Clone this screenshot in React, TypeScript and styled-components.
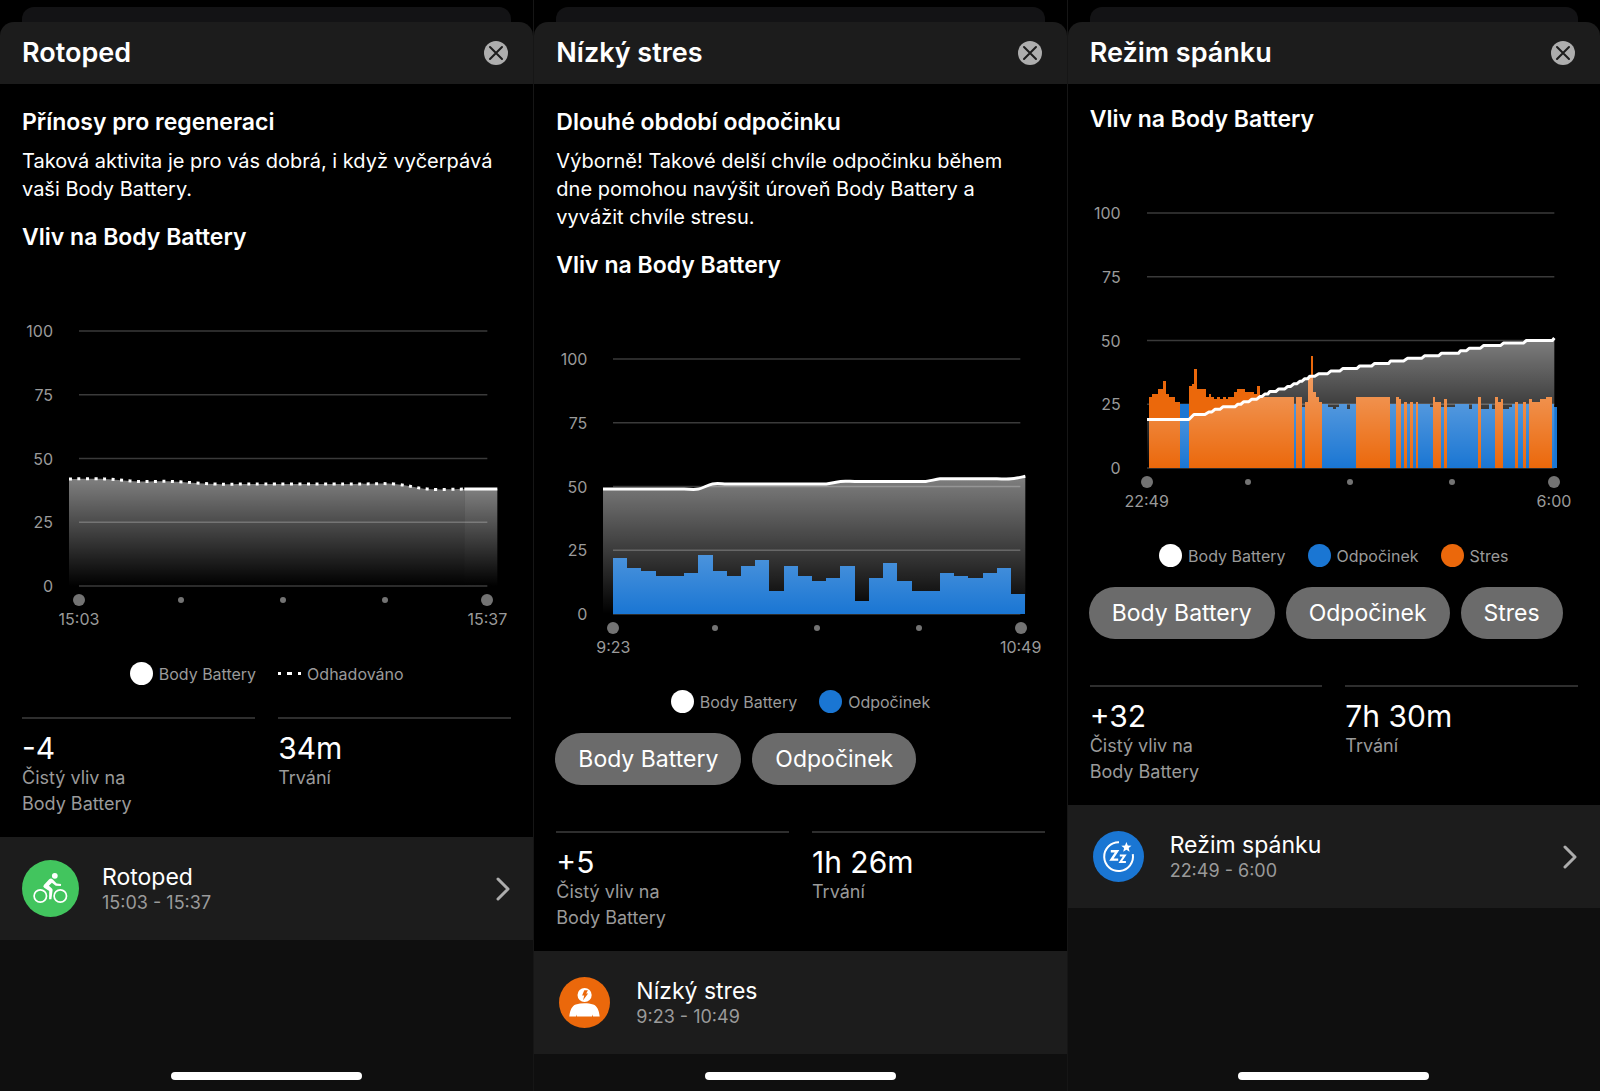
import React from "react";
import styled, { createGlobalStyle } from "styled-components";

/* ---------- theme values ---------- */

const color = {
  sheet: "#1c1c1c",
  backSheet: "#131315",
  below: "#0f0f0f",
  text: "#ffffff",
  muted: "#9a9a9a",
  grid: "#3a3a3a",
  dot: "#737373",
  chip: "#6b6b6b",
  blue: "#1a76d3",
  orange: "#eb680b",
  green: "#42c55e",
};

const GlobalStyle = createGlobalStyle`
  *, *::before, *::after { box-sizing: border-box; }
  body {
    margin: 0;
    background: #000;
    color: ${color.text};
    font-family: Inter, "Noto Sans", sans-serif;
  }
  h1, h2, p, dl, dd, dt { margin: 0; }
`;

/* ---------- layout ---------- */

const Screens = styled.div`
  display: grid;
  grid-template-columns: repeat(3, minmax(0, 1fr));
  min-height: 100vh;
`;

const Screen = styled.section`
  display: flex;
  flex-direction: column;
  background: ${color.below};

  & + & {
    border-left: 1px solid #161616;
  }
`;

const StackedSheets = styled.div`
  padding: 7px 22px 0;
  background: #000;
`;

const BackSheet = styled.div`
  height: 15px;
  border-radius: 12px 12px 0 0;
  background: ${color.backSheet};
`;

const HeaderWrap = styled.div`
  background: #000;
`;

const Header = styled.header`
  display: flex;
  align-items: center;
  justify-content: space-between;
  height: 62px;
  padding: 0 25px 0 22px;
  border-radius: 14px 14px 0 0;
  background: ${color.sheet};
`;

const Title = styled.h1`
  font-size: 27px;
  line-height: 32px;
  font-weight: 600;
`;

const CloseButton = styled.button`
  display: block;
  width: 24px;
  height: 24px;
  padding: 0;
  border: 0;
  border-radius: 50%;
  background: #adadad;
  cursor: pointer;

  svg {
    display: block;
  }
`;

const Content = styled.div<{ $compact?: boolean }>`
  padding: ${(p) => (p.$compact ? 21 : 24)}px 22px 20px;
  background: #000;
`;

const Heading = styled.h2`
  font-size: 23px;
  line-height: 28px;
  font-weight: 600;
`;

const Intro = styled.p`
  margin: 11px 0 20px;
  padding-right: 10px;
  font-size: 20px;
  line-height: 28px;
`;

/* ---------- chart ---------- */

const ChartArea = styled.figure`
  display: grid;
  grid-template-columns: 31px minmax(0, 1fr);
  column-gap: 26px;
  margin: 80px 24px 0 0;
`;

const YAxis = styled.div`
  display: flex;
  flex-direction: column;
  justify-content: space-between;
  height: 273px;
  margin-top: -9px;
  text-align: right;
  font-size: 16px;
  line-height: 18px;
  color: ${color.muted};
`;

const Plot = styled.svg`
  display: block;
  width: 100%;
  height: 255px;
  overflow: visible;
`;

const XAxis = styled.div`
  grid-column: 2;
  display: flex;
  justify-content: space-between;
  margin: -1px -30px 0;
`;

const Tick = styled.div`
  display: flex;
  flex-direction: column;
  align-items: center;
  gap: 4px;
  width: 60px;
  font-size: 16px;
  line-height: 18px;
  color: ${color.muted};
`;

const TickDot = styled.span<{ $small?: boolean }>`
  width: ${(p) => (p.$small ? 6 : 12)}px;
  height: ${(p) => (p.$small ? 6 : 12)}px;
  margin: ${(p) => (p.$small ? 3 : 0)}px 0;
  border-radius: 50%;
  background: ${color.dot};
`;

const Legend = styled.div`
  display: flex;
  justify-content: center;
  gap: 22px;
  margin-top: 34px;
`;

const LegendItem = styled.span`
  display: flex;
  align-items: center;
  gap: 6px;
  height: 23px;
  font-size: 16px;
  line-height: 18px;
  color: ${color.muted};
`;

const Swatch = styled.span<{ $color: string }>`
  width: 23px;
  height: 23px;
  border-radius: 50%;
  background: ${(p) => p.$color};
`;

const Chips = styled.div`
  display: flex;
  gap: 11px;
  margin: 20px -22px 0 -1px;
`;

const Chip = styled.button`
  height: 52px;
  padding: 0 23px;
  border: 0;
  border-radius: 26px;
  background: ${color.chip};
  color: ${color.text};
  font: inherit;
  font-size: 23px;
  white-space: nowrap;
  cursor: pointer;
`;

/* ---------- statistics ---------- */

const Stats = styled.dl<{ $spaced?: boolean }>`
  display: grid;
  grid-template-columns: repeat(2, minmax(0, 1fr));
  column-gap: 23px;
  margin-top: ${(p) => (p.$spaced ? 46 : 32)}px;
`;

const Stat = styled.div`
  display: flex;
  flex-direction: column-reverse;
  justify-content: flex-end;
  padding-top: 12px;
  border-top: 2px solid #2e2e2e;
`;

const StatValue = styled.dd`
  font-size: 30px;
  line-height: 34px;
`;

const StatLabel = styled.dt`
  max-width: 130px;
  font-size: 18px;
  line-height: 26px;
  color: ${color.muted};
`;

/* ---------- activity row ---------- */

const ActivityRow = styled.a`
  display: flex;
  align-items: center;
  height: 103px;
  padding: 0 23px 0 22px;
  background: ${color.sheet};
  color: inherit;
  text-decoration: none;
`;

const IconSlot = styled.span`
  display: flex;
  justify-content: center;
  width: 57px;
  margin-right: 23px;
`;

const ActivityText = styled.span`
  display: flex;
  flex: 1;
  flex-direction: column;
`;

const ActivityName = styled.span`
  font-size: 23px;
  line-height: 28px;
`;

const ActivityTime = styled.span`
  font-size: 18px;
  line-height: 24px;
  color: ${color.muted};
`;

const Footer = styled.footer`
  display: flex;
  justify-content: center;
  margin-top: auto;
  padding: 11px 0;
`;

const HomeIndicator = styled.div`
  width: 191px;
  height: 8px;
  border-radius: 4px;
  background: #fff;
`;

/* ---------- icons ---------- */

const CloseIcon = () => (
  <svg width="24" height="24" viewBox="0 0 24 24" aria-hidden="true">
    <path d="M6 6l12 12M18 6L6 18" stroke="#1c1c1c" strokeWidth="2" strokeLinecap="round" />
  </svg>
);

const ChevronIcon = () => (
  <svg width="14" height="24" viewBox="0 0 14 24" fill="none" aria-hidden="true">
    <path d="M2 2l10 10L2 22" stroke="#adadad" strokeWidth="3" strokeLinecap="round" strokeLinejoin="round" />
  </svg>
);

const BikeIcon = () => (
  <svg width="57" height="57" viewBox="0 0 57 57" aria-hidden="true">
    <circle cx="28.5" cy="28.5" r="28.5" fill={color.green} />
    <g fill="none" stroke="#fff" strokeWidth="1.7">
      <circle cx="18.3" cy="36" r="6.2" />
      <circle cx="38.3" cy="36" r="6.2" />
    </g>
    <circle cx="32.8" cy="15.8" r="2.9" fill="#fff" />
    <path
      d="M27.2 19.2q1.8-1.4 3.6.2l3.9 4 4.4.6-.2 1.9-5.2-.2-3.8-3-3 3.1 3 2.6q.8.8.7 1.8l-1.2 9h-2.3l.1-8.2-5-3.2q-1.7-1.3-.3-2.9z"
      fill="#fff"
    />
  </svg>
);

const StressIcon = () => (
  <svg width="51" height="51" viewBox="0 0 51 51" aria-hidden="true">
    <circle cx="25.5" cy="25.5" r="25.5" fill={color.orange} />
    <circle cx="25.6" cy="18" r="7.1" fill="#fff" />
    <path d="M25.3 13.2h3.6l-1.7 3.4h1.9l-5 6.6 1.1-4.8h-2.1z" fill={color.orange} />
    <path
      d="M10.3 39.4c.7-6.5 2.7-10.7 6.5-12 5.4-1.6 12.2-1.6 17.4 0 3.8 1.3 5.8 5.5 6.5 12h-6.700l-.3-1.8-.7 1.8H18l-.4-1.8-.5 1.8z"
      fill="#fff"
    />
  </svg>
);

const SleepIcon = () => (
  <svg width="51" height="51" viewBox="0 0 51 51" aria-hidden="true">
    <circle cx="25.5" cy="25.5" r="25.5" fill={color.blue} />
    <path d="M26 11.2A14.4 14.4 0 1 0 39.8 23.2" fill="none" stroke="#fff" strokeWidth="2" />
    <path
      d="M33.4 11l1.4 3.4 3.7.3-2.8 2.4.9 3.6-3.2-2-3.2 2 .9-3.6-2.8-2.4 3.7-.3z"
      fill="#fff"
    />
    <g fill="none" stroke="#fff">
      <path d="M17.8 20.2h6.3l-5.6 8.4h6.7" strokeWidth="2.4" />
      <path d="M26.8 24.4h5l-4.4 6.5h5.5" strokeWidth="2" />
    </g>
  </svg>
);

const DashSwatch = () => (
  <svg width="23" height="3" viewBox="0 0 23 3" fill="#fff" aria-hidden="true">
    <rect width="3" height="3" />
    <rect x="9" width="5" height="3" />
    <rect x="20" width="3" height="3" />
  </svg>
);

/* ---------- chart data ---------- */

type Point = [number, number];
type Bar = { kind: "rest" | "stress"; value: number };
type BarSet = { start: number; end: number; bars: Bar[] };

const PLOT_W = 408;
const PLOT_H = 255;
const levelY = (v: number) => PLOT_H - (v * PLOT_H) / 100;

const bikeEstimated: Point[] = [
  [-10, 42], [25, 42], [59, 41], [93, 41], [135, 40], [175, 40],
  [275, 40], [315, 40], [349, 38], [385, 38],
];
const bikeMeasured: Point[] = [[385, 38], [418, 38]];

const restLevels = [
  22, 18, 17, 15, 15, 16, 23, 17, 15, 19, 21, 9, 19, 15, 13,
  14, 19, 5, 14, 20, 13, 9, 9, 16, 15, 14, 16, 18, 8,
];
const restStep = 413 / restLevels.length;
const restBattery: Point[] = [
  [-10, 49],
  ...restLevels.map((_, i): Point => {
    const at = i + 1;
    return [at * restStep, at < 7 ? 49 : at < 16 ? 51 : at < 23 ? 52 : at < 29 ? 53 : 54];
  }),
];

/* Sleep levels, run-length encoded: s = stress, r = rest, "<level>x<count>". */
const sleepRuns =
  "s28x1 s29x2 s31x2 s34x1 s29x1 s28x2 s26x2 r25x3 s32x1 s33x1 s39x1 s31x3 s28x1 s29x1 s28x1 " +
  "s27x1 s28x1 s27x1 s28x1 s27x1 s28x2 s30x1 s31x3 s30x3 s29x1 s32x1 s28x12 r25x1 s28x2 r24x1 " +
  "s26x1 s36x1 s44x1 s30x1 s28x1 s26x1 r25x2 r24x2 r23x1 r24x1 r25x3 r23x1 r25x2 s28x12 r25x2 " +
  "s28x1 s27x1 r25x1 s26x1 r25x1 s26x1 r25x1 s26x1 r25x4 r24x1 s28x1 s26x2 r24x1 s27x1 r24x3 " +
  "r25x5 r23x1 r25x2 s28x1 r23x3 r25x1 r23x1 s28x1 s26x1 s27x1 r23x2 r24x1 r25x1 s26x1 r25x2 " +
  "s26x1 r25x1 s27x1 s26x3 s27x2 s28x2 r25x1 r24x1";

const sleepBars: Bar[] = sleepRuns.split(" ").flatMap((run) => {
  const [value, count] = run.slice(1).split("x").map(Number);
  return Array.from({ length: count }, (): Bar => ({ kind: run[0] === "s" ? "stress" : "rest", value }));
});

/* Plateaus of the battery level over the night: [level, from, to]. */
const sleepBattery: Point[] = (
  [
    [19, 0, 42], [21, 47, 58], [22, 62, 65], [23, 68, 73], [24, 76, 88], [25, 91, 94],
    [26, 97, 102], [27, 105, 110], [28, 113, 115], [29, 118, 121], [30, 123, 129],
    [31, 132, 138], [32, 141, 144], [33, 147, 150], [34, 153, 155], [35, 158, 161],
    [36, 163, 168], [37, 172, 181], [38, 184, 193], [39, 196, 210], [40, 213, 225],
    [41, 228, 242], [42, 244, 257], [43, 261, 275], [44, 278, 292], [45, 295, 312],
    [46, 314, 320], [47, 323, 334], [48, 337, 354], [49, 357, 377], [50, 380, 406],
    [51, 408, 408],
  ] as [number, number, number][]
).flatMap(([v, a, b]): Point[] => [[a, v], [b, v]]);

/* ---------- chart drawing ---------- */

const straightPath = (pts: Point[]) =>
  pts.map(([x, v], i) => `${i ? "L" : "M"}${x} ${levelY(v)}`).join("");

const smoothPath = (pts: Point[]) =>
  pts
    .map(([x, v], i) => {
      if (!i) return `M${x} ${levelY(v)}`;
      const p0 = pts[Math.max(i - 2, 0)];
      const p1 = pts[i - 1];
      const p3 = pts[Math.min(i + 1, pts.length - 1)];
      return (
        `C${p1[0] + (x - p0[0]) / 6} ${levelY(p1[1] + (v - p0[1]) / 6)} ` +
        `${x - (p3[0] - p1[0]) / 6} ${levelY(v - (p3[1] - p1[1]) / 6)} ${x} ${levelY(v)}`
      );
    })
    .join("");

type Series = { points: Point[]; dotted?: boolean; smooth?: boolean };

type ChartProps = {
  id: string;
  label: string;
  from: string;
  to: string;
  series: Series[];
  barSet?: BarSet;
};

function Chart({ id, label, from, to, series, barSet }: ChartProps) {
  const step = barSet ? (barSet.end - barSet.start) / barSet.bars.length : 0;
  return (
    <ChartArea aria-label={label}>
      <YAxis>
        {[100, 75, 50, 25, 0].map((v) => (
          <span key={v}>{v}</span>
        ))}
      </YAxis>
      <Plot viewBox={`0 0 ${PLOT_W} ${PLOT_H}`} preserveAspectRatio="none" aria-hidden="true">
        <defs>
          <linearGradient id={`${id}-fade`} x1="0" y1="0" x2="0" y2="1">
            <stop offset="0" stopColor="#fff" stopOpacity="0.5" />
            <stop offset="1" stopColor="#fff" stopOpacity="0" />
          </linearGradient>
        </defs>
        {[100, 75, 50, 25, 0].map((v) => (
          <line key={v} x1="0" x2={PLOT_W} y1={levelY(v)} y2={levelY(v)} stroke={color.grid} strokeWidth="1.5" />
        ))}
        {barSet && (
          <g shapeRendering="crispEdges">
            {barSet.bars.map((b, i) => (
              <rect
                key={i}
                x={barSet.start + i * step}
                y={levelY(b.value)}
                width={step}
                height={PLOT_H - levelY(b.value)}
                fill={b.kind === "rest" ? color.blue : color.orange}
              />
            ))}
          </g>
        )}
        {series.map(({ points, dotted, smooth }, i) => {
          const line = smooth ? smoothPath(points) : straightPath(points);
          return (
            <g key={i}>
              <path
                d={`${line}L${points[points.length - 1][0]} ${PLOT_H}L${points[0][0]} ${PLOT_H}Z`}
                fill={`url(#${id}-fade)`}
              />
              <path
                d={line}
                fill="none"
                stroke="#fff"
                strokeWidth="3"
                strokeLinejoin="round"
                strokeDasharray={dotted ? "3 5.5" : undefined}
              />
            </g>
          );
        })}
      </Plot>
      <XAxis>
        <Tick><TickDot />{from}</Tick>
        <Tick><TickDot $small /></Tick>
        <Tick><TickDot $small /></Tick>
        <Tick><TickDot $small /></Tick>
        <Tick><TickDot />{to}</Tick>
      </XAxis>
    </ChartArea>
  );
}

/* ---------- screen ---------- */

type LegendEntry = { label: string; color?: string };

type DetailProps = {
  title: string;
  heading?: string;
  intro?: string;
  chart: ChartProps;
  legend: LegendEntry[];
  filters?: string[];
  impact: string;
  duration: string;
  icon: React.ReactNode;
  linked?: boolean;
};

function DetailScreen(p: DetailProps) {
  return (
    <Screen>
      <StackedSheets>
        <BackSheet />
      </StackedSheets>
      <HeaderWrap>
        <Header>
          <Title>{p.title}</Title>
          <CloseButton type="button" aria-label="Zavřít">
            <CloseIcon />
          </CloseButton>
        </Header>
      </HeaderWrap>
      <Content $compact={!p.heading}>
        {p.heading && (
          <>
            <Heading>{p.heading}</Heading>
            <Intro>{p.intro}</Intro>
          </>
        )}
        <Heading>Vliv na Body Battery</Heading>
        <Chart {...p.chart} />
        <Legend>
          {p.legend.map((l) => (
            <LegendItem key={l.label}>
              {l.color ? <Swatch $color={l.color} /> : <DashSwatch />}
              {l.label}
            </LegendItem>
          ))}
        </Legend>
        {p.filters && (
          <Chips>
            {p.filters.map((f) => (
              <Chip key={f} type="button" aria-pressed="true">
                {f}
              </Chip>
            ))}
          </Chips>
        )}
        <Stats $spaced={!!p.filters}>
          <Stat>
            <StatLabel>Čistý vliv na Body Battery</StatLabel>
            <StatValue>{p.impact}</StatValue>
          </Stat>
          <Stat>
            <StatLabel>Trvání</StatLabel>
            <StatValue>{p.duration}</StatValue>
          </Stat>
        </Stats>
      </Content>
      <ActivityRow as={p.linked ? "a" : "div"} href={p.linked ? "#" : undefined}>
        <IconSlot>{p.icon}</IconSlot>
        <ActivityText>
          <ActivityName>{p.title}</ActivityName>
          <ActivityTime>
            {p.chart.from} - {p.chart.to}
          </ActivityTime>
        </ActivityText>
        {p.linked && <ChevronIcon />}
      </ActivityRow>
      <Footer>
        <HomeIndicator />
      </Footer>
    </Screen>
  );
}

const battery: LegendEntry = { label: "Body Battery", color: "#ffffff" };
const rest: LegendEntry = { label: "Odpočinek", color: color.blue };
const stress: LegendEntry = { label: "Stres", color: color.orange };

export default function App() {
  return (
    <>
      <GlobalStyle />
      <Screens>
        <DetailScreen
          title="Rotoped"
          heading="Přínosy pro regeneraci"
          intro="Taková aktivita je pro vás dobrá, i když vyčerpává vaši Body Battery."
          chart={{
            id: "bike",
            label: "Body Battery, 15:03 až 15:37",
            from: "15:03",
            to: "15:37",
            series: [{ points: bikeEstimated, dotted: true, smooth: true }, { points: bikeMeasured }],
          }}
          legend={[battery, { label: "Odhadováno" }]}
          impact="-4"
          duration="34m"
          icon={<BikeIcon />}
          linked
        />
        <DetailScreen
          title="Nízký stres"
          heading="Dlouhé období odpočinku"
          intro="Výborně! Takové delší chvíle odpočinku během dne pomohou navýšit úroveň Body Battery a vyvážit chvíle stresu."
          chart={{
            id: "rest",
            label: "Body Battery a odpočinek, 9:23 až 10:49",
            from: "9:23",
            to: "10:49",
            series: [{ points: restBattery, smooth: true }],
            barSet: { start: 0, end: 413, bars: restLevels.map((value): Bar => ({ kind: "rest", value })) },
          }}
          legend={[battery, rest]}
          filters={["Body Battery", "Odpočinek"]}
          impact="+5"
          duration="1h 26m"
          icon={<StressIcon />}
        />
        <DetailScreen
          title="Režim spánku"
          chart={{
            id: "sleep",
            label: "Body Battery, odpočinek a stres, 22:49 až 6:00",
            from: "22:49",
            to: "6:00",
            series: [{ points: sleepBattery }],
            barSet: { start: 2, end: 411, bars: sleepBars },
          }}
          legend={[battery, rest, stress]}
          filters={["Body Battery", "Odpočinek", "Stres"]}
          impact="+32"
          duration="7h 30m"
          icon={<SleepIcon />}
          linked
        />
      </Screens>
    </>
  );
}
